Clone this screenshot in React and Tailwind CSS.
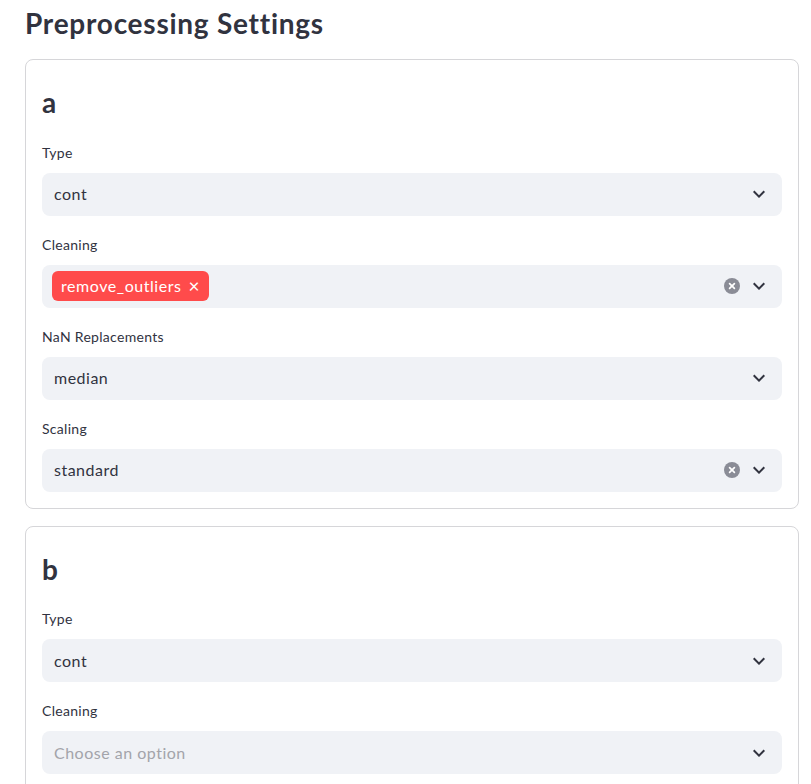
import React from 'react';

const font = { fontFamily: '"Lato", "Noto Sans", sans-serif' };

function Chevron() {
  return (
    <svg width="24" height="24" viewBox="0 0 24 24" className="shrink-0">
      <path d="M7.41 8.59 12 13.17l4.59-4.58L18 10l-6 6-6-6 1.41-1.41z" fill="#31333f" />
    </svg>
  );
}

function ClearIcon() {
  return (
    <svg width="16" height="16" viewBox="0 0 16 16" className="shrink-0">
      <circle cx="8" cy="8" r="8" fill="#8a8c96" />
      <path d="M5.6 5.6l4.8 4.8M10.4 5.6l-4.8 4.8" stroke="#fff" strokeWidth="1.7" strokeLinecap="round" />
    </svg>
  );
}

function Field({ label, children, clearable }) {
  return (
    <div className="flex flex-col">
      <div className="h-[33px] pt-[2px] text-[14px] leading-[21px] tracking-[0.3px] text-[#31333f]">{label}</div>
      <div className="h-[43px] rounded-lg bg-[#f0f2f6] flex items-center pl-[12px] pr-[11px]">
        <div className="flex-1 flex items-center min-w-0">{children}</div>
        {clearable && <div className="mr-[7px] flex items-center"><ClearIcon /></div>}
        <Chevron />
      </div>
    </div>
  );
}

function Value({ text }) {
  return <span className="text-[16px] tracking-[0.5px] text-[#31333f]">{text}</span>;
}

function Tag({ text }) {
  return (
    <span className="-ml-[2px] h-[30px] rounded-md bg-[#ff4b4b] text-white text-[16px] tracking-[0.55px] flex items-center pl-[9px] pr-[9px] gap-[7px]">
      {text}
      <span className="text-[19px] leading-none -mt-[1px]">×</span>
    </span>
  );
}

function Card({ name, fields }) {
  return (
    <div className="border border-[#d6d6d9] rounded-lg p-4 flex flex-col gap-4">
      <div className="pt-[10px] pb-[4px] text-[28px] leading-[1.2] font-bold text-[#31333f]">{name}</div>
      {fields.map(f => (
        <Field key={f.label} label={f.label} clearable={f.clearable}>
          {f.tag ? <Tag text={f.tag} /> :
            f.placeholder ? <span className="text-[16px] tracking-[0.5px] text-[#a3a4aa]">{f.placeholder}</span> :
            <Value text={f.value} />}
        </Field>
      ))}
    </div>
  );
}

export default function App() {
  const cards = [
    { name: 'a', fields: [
      { label: 'Type', value: 'cont' },
      { label: 'Cleaning', tag: 'remove_outliers', clearable: true },
      { label: 'NaN Replacements', value: 'median' },
      { label: 'Scaling', value: 'standard', clearable: true },
    ]},
    { name: 'b', fields: [
      { label: 'Type', value: 'cont' },
      { label: 'Cleaning', placeholder: 'Choose an option' },
      { label: 'NaN Replacements', value: 'median' },
      { label: 'Scaling', value: 'standard', clearable: true },
    ]},
  ];
  return (
    <div className="bg-white min-h-screen" style={font}>
      <div className="ml-[25px] w-[774px] pt-[7px]">
        <h3 className="text-[28px] leading-[1.2] font-bold tracking-[0.75px] text-[#31333f] h-[52px]">Preprocessing Settings</h3>
        <div className="flex flex-col gap-[17px]">
          {cards.map(c => <Card key={c.name} {...c} />)}
        </div>
      </div>
    </div>
  );
}
